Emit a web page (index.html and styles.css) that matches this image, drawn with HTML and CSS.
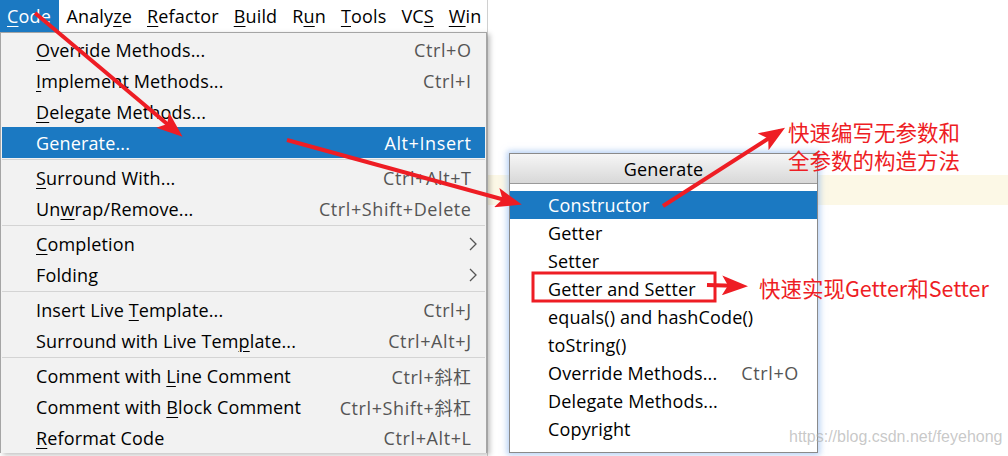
FILE: index.html
```html
<!DOCTYPE html>
<html lang="en">
<head>
    <meta charset="UTF-8">
    <title>Code - Generate</title>
    <link rel="stylesheet" href="styles.css">
</head>
<body>
    <div class="screen">
        <div class="left">
            <div class="menubar">
                <span class="top active"><u>C</u>ode</span>
                <span class="top">Analy<u>z</u>e</span>
                <span class="top"><u>R</u>efactor</span>
                <span class="top"><u>B</u>uild</span>
                <span class="top">R<u>u</u>n</span>
                <span class="top"><u>T</u>ools</span>
                <span class="top">VC<u>S</u></span>
                <span class="top"><u>W</u>in</span>
            </div>
            <div class="menu">
                <div class="item"><span><u>O</u>verride Methods...</span><span class="key">Ctrl+O</span></div>
                <div class="item"><span><u>I</u>mplement Methods...</span><span class="key">Ctrl+I</span></div>
                <div class="item"><span><u>D</u>elegate Methods...</span></div>
                <div class="item selected"><span>Generate...</span><span class="key">Alt+Insert</span></div>
                <div class="sep"></div>
                <div class="item"><span><u>S</u>urround With...</span><span class="key">Ctrl+Alt+T</span></div>
                <div class="item"><span>Un<u>w</u>rap/Remove...</span><span class="key">Ctrl+Shift+Delete</span></div>
                <div class="sep"></div>
                <div class="item"><span><u>C</u>ompletion</span>
                    <svg class="chev" width="8" height="14" viewBox="0 0 8 14"><path d="M1 1 L7 7 L1 13" fill="none" stroke="#555" stroke-width="1.3"/></svg>
                </div>
                <div class="item"><span>Folding</span>
                    <svg class="chev" width="8" height="14" viewBox="0 0 8 14"><path d="M1 1 L7 7 L1 13" fill="none" stroke="#555" stroke-width="1.3"/></svg>
                </div>
                <div class="sep"></div>
                <div class="item"><span>Insert Live <u>T</u>emplate...</span><span class="key">Ctrl+J</span></div>
                <div class="item"><span>Surround with Live Tem<u>p</u>late...</span><span class="key">Ctrl+Alt+J</span></div>
                <div class="sep"></div>
                <div class="item"><span>Comment with <u>L</u>ine Comment</span><span class="key">Ctrl+斜杠</span></div>
                <div class="item"><span>Comment with <u>B</u>lock Comment</span><span class="key">Ctrl+Shift+斜杠</span></div>
                <div class="item"><span><u>R</u>eformat Code</span><span class="key">Ctrl+Alt+L</span></div>
            </div>
        </div>
        <div class="editor">
            <div class="caret-line"></div>
        </div>
    </div>

    <div class="popup">
        <div class="popup-title">Generate</div>
        <div class="popup-list">
            <div class="row selected">Constructor</div>
            <div class="row">Getter</div>
            <div class="row">Setter</div>
            <div class="row">Getter and Setter</div>
            <div class="row">equals() and hashCode()</div>
            <div class="row">toString()</div>
            <div class="row">Override Methods...<span class="key">Ctrl+O</span></div>
            <div class="row">Delegate Methods...</div>
            <div class="row">Copyright</div>
        </div>
    </div>

    <!-- red annotations drawn on top of the screenshot -->
    <svg class="marks" width="1008" height="456" viewBox="0 0 1008 456">
        <defs>
            <marker id="head" markerUnits="userSpaceOnUse" markerWidth="26" markerHeight="20" refX="20" refY="10" orient="auto">
                <path d="M0 0 L26 10 L0 20 L6 10 Z" fill="#ee1d24"/>
            </marker>
        </defs>
        <g stroke="#ee1d24" stroke-width="4" fill="none">
            <line x1="35" y1="13" x2="178" y2="133" marker-end="url(#head)"/>
            <line x1="287" y1="140" x2="516" y2="203" marker-end="url(#head)"/>
            <line x1="663" y1="206" x2="780" y2="131" marker-end="url(#head)"/>
            <line x1="707" y1="285" x2="742" y2="286" marker-end="url(#head)"/>
            <rect x="533" y="273" width="182" height="28" stroke-width="3"/>
        </g>
    </svg>
    <div class="note note-ctor">
        <div>快速编写无参数和</div>
        <div>全参数的构造方法</div>
    </div>
    <div class="note note-gs">快速实现Getter和Setter</div>
    <div class="watermark">https://blog.csdn.net/feyehong</div>
</body>
</html>
```

FILE: styles.css
```css
body {
    margin: 0;
    background: #fff;
    font-family: "Open Sans", "Noto Sans CJK SC", sans-serif;
    font-size: 18px;
    letter-spacing: 0.15px;
    color: #000;
    overflow: hidden;
}
u {
    text-decoration-thickness: 1px;
    text-underline-offset: 3px;
}
.screen {
    display: flex;
    width: 1008px;
    height: 456px;
}
.left {
    width: 487px;
    flex-shrink: 0;
    position: relative;
    z-index: 2;
}
.menubar {
    display: flex;
    height: 32px;
    align-items: stretch;
    background: #fff;
    white-space: nowrap;
    overflow: hidden;
}
.top {
    display: flex;
    align-items: center;
    padding: 0 7.5px;
    line-height: 32px;
}
.top.active {
    background: #1b79c2;
    color: #fff;
    padding: 0 8px 0 7px;
}
.menu {
    background: #f2f2f2;
    border: 1px solid #a5a5a5;
    border-bottom: none;
    padding: 1px 1px 0;
    box-shadow: 3px 2px 5px rgba(0,0,0,0.25);
}
.item {
    display: flex;
    justify-content: space-between;
    align-items: center;
    height: 31px;
    padding: 0 14px 0 34px;
    white-space: nowrap;
}
.item .key {
    color: #555;
    letter-spacing: 0.6px;
    margin-right: -0.6px;
}
.item.selected {
    background: #1b79c2;
    color: #fff;
}
.item.selected .key {
    color: #fff;
}
.chev {
    margin-right: -6px;
}
.sep {
    height: 1px;
    background: #d4d4d4;
    margin: 1px 0 2px;
}
.editor {
    flex: 1;
    border-left: 1px solid #d0d0d0;
}
.caret-line {
    margin-top: 175px;
    height: 30px;
    background: #fcf8e6;
}
.popup {
    position: absolute;
    left: 509px;
    top: 153px;
    width: 307px;
    height: 298px;
    background: #fff;
    border: 1px solid #8a8a8a;
    box-shadow: 0 0 6px 2px rgba(120,170,235,0.55);
    z-index: 3;
}
.popup-title {
    height: 29px;
    line-height: 30px;
    text-align: center;
    background: linear-gradient(#f6f6f6, #d8d8d8);
    border-bottom: 1px solid #9a9a9a;
}
.popup-list {
    padding-top: 7px;
}
.row {
    height: 28px;
    line-height: 28px;
    padding-left: 38px;
    white-space: nowrap;
}
.row .key {
    color: #555;
    letter-spacing: 0.6px;
    margin-left: 24px;
}
.row.selected {
    background: #1b79c2;
    color: #fff;
}
.marks {
    position: absolute;
    left: 0;
    top: 0;
    z-index: 5;
    pointer-events: none;
}
.note {
    position: absolute;
    color: #ee1d24;
    font-family: "Noto Sans CJK SC", sans-serif;
    font-size: 21.5px;
    line-height: 28px;
    letter-spacing: 0;
    z-index: 6;
    white-space: nowrap;
}
.note-ctor {
    left: 788px;
    top: 118px;
}
.note-gs {
    left: 759px;
    top: 274px;
}
.watermark {
    position: absolute;
    left: 789px;
    top: 428px;
    font-family: "Liberation Sans", sans-serif;
    font-size: 16px;
    letter-spacing: 0;
    color: rgba(170,170,170,0.65);
    z-index: 6;
}
```
